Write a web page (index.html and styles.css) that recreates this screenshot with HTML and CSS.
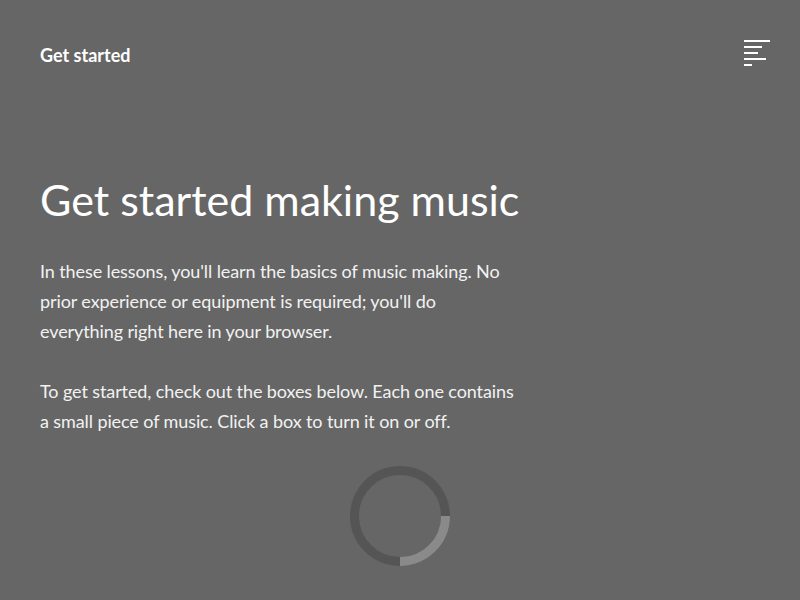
FILE: index.html
```html
<!DOCTYPE html>
<html lang="en">
<head>
<meta charset="utf-8">
<title>Get started</title>
<link rel="stylesheet" href="styles.css">
</head>
<body>
<header class="topbar">
  <a class="brand" href="#">Get started</a>
  <button class="menu" aria-label="Menu">
    <svg width="26" height="26" viewBox="0 0 26 26">
      <rect x="0" y="0" width="26" height="2" fill="#fff"/>
      <rect x="0" y="6" width="18" height="2" fill="#fff"/>
      <rect x="0" y="12" width="14" height="2" fill="#fff"/>
      <rect x="0" y="18" width="22" height="2" fill="#fff"/>
      <rect x="0" y="24" width="8" height="2" fill="#fff"/>
    </svg>
  </button>
</header>
<main class="content">
  <h1 class="title">Get started making music</h1>
  <p class="text">In these lessons, you'll learn the basics of music making. No prior experience or equipment is required; you'll do everything right here in your browser.</p>
  <p class="text">To get started, check out the boxes below. Each one contains a small piece of music. Click a box to turn it on or off.</p>
  <div class="loader">
    <svg width="100" height="100" viewBox="0 0 100 100">
      <circle cx="50" cy="50" r="45.5" fill="none" stroke="#555" stroke-width="9"/>
      <path d="M95.5 50 A45.5 45.5 0 0 1 50 95.5" fill="none" stroke="#8a8a8a" stroke-width="9"/>
    </svg>
  </div>
</main>
</body>
</html>
```
FILE: styles.css
```css
html, body {
  margin: 0;
  padding: 0;
  background: #666666;
  color: #ffffff;
  font-family: "Lato", "Noto Sans", sans-serif;
  height: 100%;
  overflow: hidden;
}
.topbar {
  display: flex;
  justify-content: space-between;
  align-items: flex-start;
  padding: 40px 30px 0 40px;
}
.brand {
  color: #fff;
  text-decoration: none;
  font-size: 18px;
  font-weight: 700;
  line-height: 30px;
}
.menu {
  background: none;
  border: 0;
  padding: 0;
  margin: 0;
  width: 26px;
  height: 26px;
  display: block;
}
.menu svg { display: block; }
.content {
  padding: 0 40px;
  max-width: 478px;
}
.title {
  margin: 98px 0 24px;
  font-size: 43px;
  font-weight: 400;
  line-height: 64px;
  white-space: nowrap;
}
.text {
  margin: 0 0 30px;
  font-size: 18px;
  letter-spacing: -0.1px;
  line-height: 30px;
  color: #f2f2f2;
}
.loader {
  display: flex;
  justify-content: center;
  width: 720px;
}
.loader svg { display: block; }
```
